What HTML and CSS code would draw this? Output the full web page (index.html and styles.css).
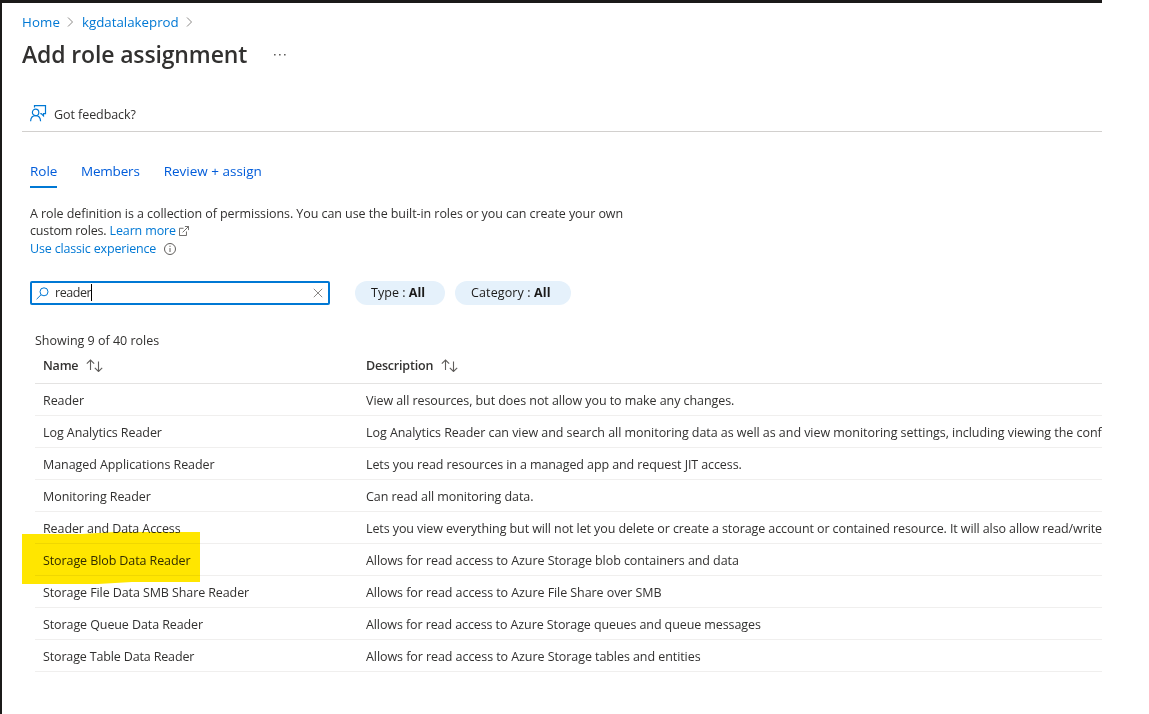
FILE: index.html
```html
<!DOCTYPE html>
<html lang="en">
<head>
<meta charset="utf-8">
<title>Add role assignment</title>
<link rel="stylesheet" href="styles.css">
</head>
<body>
<div class="blade">
  <nav class="crumbs">
    <a class="crumb-home">Home</a>
    <svg class="chev" width="7" height="10" viewBox="0 0 7 10"><path d="M1 .5 5.5 5 1 9.5"/></svg>
    <a class="crumb-lake">kgdatalakeprod</a>
    <svg class="chev" width="7" height="10" viewBox="0 0 7 10"><path d="M1 .5 5.5 5 1 9.5"/></svg>
  </nav>
  <header class="title">
    <h1>Add role assignment</h1>
    <svg class="more" width="12" height="2" viewBox="0 0 12 2"><path d="M0 0h1.600v1.600H0zM5 0h1.600v1.600H5zM10 0h1.600v1.600h-1.600z"/></svg>
  </header>
  <div class="toolbar">
    <svg class="feedback" width="17" height="17" viewBox="0 0 17 17"><path d="M4.500 2.500V.6h11v8h-2v2.300l-2.300-2.300h-.9"/><circle cx="5.600" cy="7.400" r="3.200"/><path d="M.6 16.200c.2-3.500 2.200-5.500 5-5.500s4.800 2 5 5.500"/></svg>
    <span>Got feedback?</span>
  </div>
  <div class="tabs">
    <a class="tab tab-role active">Role</a>
    <a class="tab tab-members">Members</a>
    <a class="tab tab-review">Review + assign</a>
  </div>
  <div class="intro">
    <div class="intro-a">A role definition is a collection of permissions. You can use the built-in roles or you can create your own</div>
    <div class="intro-b">custom roles. <a>Learn more</a><svg class="ext" width="10" height="10" viewBox="0 0 11 11"><path d="M5 2.500H.5v8h7.700V6M6.500.5h4v4M10.500.5 4 7"/></svg></div>
    <div class="intro-c"><a>Use classic experience</a><svg class="info" width="12" height="12" viewBox="0 0 12 12"><circle cx="6" cy="6" r="5.500"/><path d="M6 5v4M6 2.700v1.200"/></svg></div>
  </div>
  <div class="filters">
    <div class="search">
      <svg class="glass" width="13" height="13" viewBox="0 0 13 13"><circle cx="8" cy="4.800" r="4"/><path d="M5 7.800.6 12.200"/></svg>
      <span class="query">reader</span><i class="caret"></i>
      <svg class="clear" width="10" height="10" viewBox="0 0 10 10"><path d="m.8.8 8.400 8.400M9.200.8.8 9.200"/></svg>
    </div>
    <div class="pill pill-type"><span>Type : <b>All</b></span></div>
    <div class="pill pill-cat"><span>Category : <b>All</b></span></div>
  </div>
  <div class="count"><span>Showing 9 of 40 roles</span></div>
  <div class="grid">
    <div class="row head">
      <div><span class="h-name">Name</span><svg class="sort" width="17" height="13" viewBox="0 0 17 13"><path d="M4.500 11V1M.8 4.700 4.500 1l3.700 3.700M12.500 2.500v10M8.800 8.800l3.700 3.700 3.700-3.700"/></svg></div>
      <div><span class="h-desc">Description</span><svg class="sort" width="17" height="13" viewBox="0 0 17 13"><path d="M4.500 11V1M.8 4.700 4.500 1l3.700 3.700M12.500 2.500v10M8.800 8.800l3.700 3.700 3.700-3.700"/></svg></div>
    </div>
    <div class="row"><div>Reader</div><div>View all resources, but does not allow you to make any changes.</div></div>
    <div class="row"><div>Log Analytics Reader</div><div class="loose">Log Analytics Reader can view and search all monitoring data as well as and view monitoring settings, including viewing the conf</div></div>
    <div class="row"><div>Managed Applications Reader</div><div class="tight">Lets you read resources in a managed app and request JIT access.</div></div>
    <div class="row"><div>Monitoring Reader</div><div>Can read all monitoring data.</div></div>
    <div class="row"><div class="tight">Reader and Data Access</div><div class="tight">Lets you view everything but will not let you delete or create a storage account or contained resource. It will also allow read/write</div></div>
    <div class="row"><div class="tight">Storage Blob Data Reader<svg class="marker" width="178" height="52" viewBox="0 0 178 52"><path d="M0 2 60 2 92 0H178V50H110L76 52H0z"/></svg></div><div>Allows for read access to Azure Storage blob containers and data</div></div>
    <div class="row"><div class="tight">Storage File Data SMB Share Reader</div><div>Allows for read access to Azure File Share over SMB</div></div>
    <div class="row"><div class="tight">Storage Queue Data Reader</div><div class="tight">Allows for read access to Azure Storage queues and queue messages</div></div>
    <div class="row"><div class="tighter">Storage Table Data Reader</div><div>Allows for read access to Azure Storage tables and entities</div></div>
  </div>
</div>
</body>
</html>
```
FILE: styles.css
```css
* { box-sizing: border-box; }
body { margin: 0; background: #fff; font: 12.5px/18px "Open Sans", "Noto Sans", sans-serif; letter-spacing: -0.068px; color: #323130; }
a { color: #0078d4; }
svg { fill: none; flex: none; }
.blade { width: 1102px; height: 714px; border-top: 3px solid #1b1a19; border-left: 2px solid #1b1a19; padding-left: 20px; overflow: hidden; }
.crumbs { display: flex; align-items: center; height: 38px; gap: 7.5px; font-size: 13.3px; letter-spacing: 0; }
.crumb-home { letter-spacing: .1px; }
.chev path { stroke: #8a8886; }
.title { display: flex; align-items: center; height: 28px; gap: 27px; }
h1 { margin: 0; font-size: 23px; line-height: 26px; height: 28px; letter-spacing: -0.14px; font-weight: 600; white-space: nowrap; }
.more { fill: #605e5c; }
.toolbar { display: flex; align-items: center; height: 63px; padding: 27px 0 0 8px; gap: 7px; border-bottom: 1px solid #d2d0ce; }
.toolbar span { padding-top: 2px; }
.feedback { stroke: #0078d4; stroke-width: 1.2; }
.tabs { display: flex; gap: 24px; padding: 26px 0 0 8px; }
.tab { height: 30px; line-height: 26px; font-size: 13.5px; letter-spacing: 0; color: #015cda; }
.tab.active { width: 27px; border-bottom: 2px solid #0078d4; }
.tab-members { letter-spacing: -0.2px; }
.intro { padding: 17px 0 0 8px; white-space: nowrap; }
.intro-a { height: 17px; }
.intro-b, .intro-c { display: flex; align-items: center; height: 18px; white-space: pre; }
.intro-b { letter-spacing: -0.15px; }
.intro-c { letter-spacing: -0.17px; }
.ext { margin-left: 3px; stroke: #605e5c; }
.info { margin-left: 8px; stroke: #605e5c; }
.filters { display: flex; padding: 23px 0 0 8px; }
.search { display: flex; align-items: center; width: 300px; height: 24px; border: 2px solid #0078d4; border-radius: 2px; padding: 0 5px 0 4px; }
.glass { stroke: #0078d4; }
.query { margin-left: 6px; letter-spacing: -0.45px; }
.caret { width: 1px; height: 17px; margin-top: -2px; background: #000; }
.clear { margin-left: auto; stroke: #8a8886; }
.pill { height: 24px; border-radius: 12px; background: #e5f1fb; line-height: 23px; padding-left: 16px; white-space: nowrap; color: #1b1a19; letter-spacing: 0.03px; }
.pill-type { width: 90px; margin-left: 25px; }
.pill-cat { width: 116px; margin-left: 10px; letter-spacing: .12px; }
.count { padding: 27px 0 0 13px; letter-spacing: 0; }
.grid { margin-left: 13px; }
.row { display: grid; grid-template-columns: 323px 1fr; height: 32px; line-height: 33px; padding-left: 8px; border-bottom: 1px solid #f0efee; white-space: nowrap; }
.row > div { position: relative; min-width: 0; }
.row > .tight { letter-spacing: -0.095px; }
.row > .tighter { letter-spacing: -0.15px; }
.row > .loose { letter-spacing: -0.048px; }
.head { height: 34px; border-color: #e4e3e2; font-weight: 600; letter-spacing: -0.2px; }
.head > div { display: flex; align-items: center; height: 30px; gap: 7.5px; }
.sort { stroke: #605e5c; stroke-width: 1.1; }
.marker { position: absolute; left: -21px; top: -12px; fill: #ffe600; mix-blend-mode: multiply; }
```
